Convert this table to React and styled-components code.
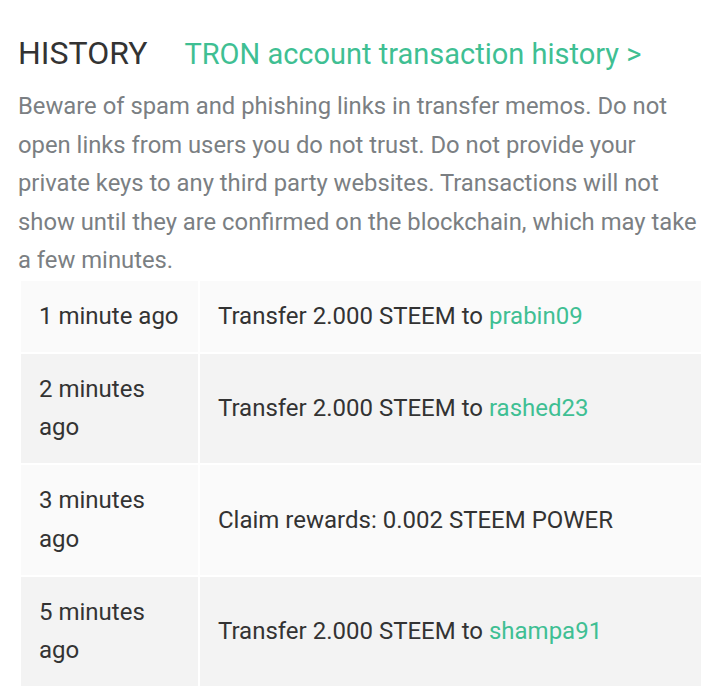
import React from "react";
import styled, { createGlobalStyle } from "styled-components";

const GlobalStyle = createGlobalStyle`
  body {
    margin: 0;
    background: #ffffff;
    font-family: Roboto, "Liberation Sans", sans-serif;
  }
`;

const rows = [
  { time: "1 minute ago", text: "Transfer 2.000 STEEM to ", user: "prabin09" },
  { time: "2 minutes ago", text: "Transfer 2.000 STEEM to ", user: "rashed23" },
  { time: "3 minutes ago", text: "Claim rewards: 0.002 STEEM POWER" },
  { time: "5 minutes ago", text: "Transfer 2.000 STEEM to ", user: "shampa91" },
];

const App = () => (
  <React.Fragment>
    <GlobalStyle />
    <Page>
      <Header>
        <Title>HISTORY</Title>
        <TronLink href="#">TRON account transaction history &gt;</TronLink>
      </Header>
      <Notice>
        Beware of spam and phishing links in transfer memos. Do not open links
        from users you do not trust. Do not provide your private keys to any
        third party websites. Transactions will not show until they are
        confirmed on the blockchain, which may take a few minutes.
      </Notice>
      <Table>
        <colgroup>
          <col style={{ width: 177 }} />
          <col />
        </colgroup>
        <tbody>
          {rows.map((row, i) => (
            <Row key={i} $odd={i % 2 === 0}>
              <Cell>{row.time}</Cell>
              <Cell>
                {row.text}
                {row.user && <UserLink href="#">{row.user}</UserLink>}
              </Cell>
            </Row>
          ))}
        </tbody>
      </Table>
    </Page>
  </React.Fragment>
);

export default App;

const Page = styled.div`
  width: 720px;
  height: 694px;
  padding: 34px 18px 0 18px;
  box-sizing: border-box;
  overflow: hidden;
`;

const Header = styled.div`
  display: flex;
  align-items: baseline;
  gap: 37px;
  height: 44px;
`;

const Title = styled.h2`
  margin: 0;
  font-size: 32px;
  font-weight: 400;
  color: #333333;
`;

const TronLink = styled.a`
  font-size: 29px;
  color: #3fbf93;
  text-decoration: none;
`;

const Notice = styled.p`
  margin: 9px -4px 0 0;
  font-size: 23.8px;
  line-height: 38.5px;
  color: #7b7f83;
`;

const Table = styled.table`
  margin: -1px 0 0 1px;
  width: 684px;
  table-layout: fixed;
  border-spacing: 2px;
  font-size: 24px;
  line-height: 38.5px;
  color: #333333;
`;

const Row = styled.tr`
  background: ${(p) => (p.$odd ? "#fafafa" : "#f3f3f3")};
`;

const Cell = styled.td`
  padding: 16.25px 18px;
  vertical-align: middle;
`;

const UserLink = styled.a`
  color: #3fbf93;
  text-decoration: none;
`;
